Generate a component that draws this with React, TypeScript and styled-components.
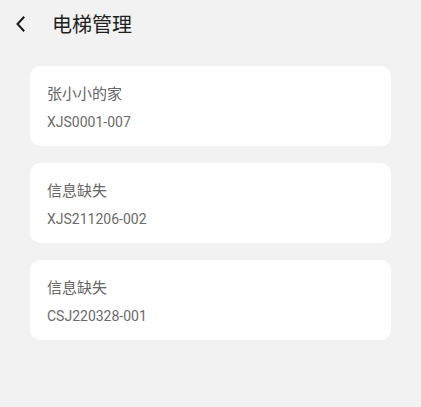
import React from "react";
import styled, { createGlobalStyle } from "styled-components";

const GlobalStyle = createGlobalStyle`
  html, body { margin: 0; padding: 0; background: #f2f2f2; }
  body { font-family: Roboto, "Noto Sans CJK SC", sans-serif; }
`;

interface Elevator {
  name: string;
  code: string;
}

const elevators: Elevator[] = [
  { name: "张小小的家", code: "XJS0001-007" },
  { name: "信息缺失", code: "XJS211206-002" },
  { name: "信息缺失", code: "CSJ220328-001" },
];

export default function App() {
  return (
    <Page>
      <GlobalStyle />
      <Header>
        <BackBtn type="button" aria-label="返回">
          <svg width="10" height="16" viewBox="0 0 10 16" fill="none">
            <path d="M7.5 1.5 L1.5 8 L7.5 14.5" stroke="#1a1a1a" strokeWidth="2" strokeLinecap="square" />
          </svg>
        </BackBtn>
        <Title>电梯管理</Title>
      </Header>

      <List>
        {elevators.map((e, i) => (
          <Card key={i}>
            <Name>{e.name}</Name>
            <Code>{e.code}</Code>
          </Card>
        ))}
      </List>
    </Page>
  );
}

// ===================== styled ===================== //
const Page = styled.main`
  min-height: 407px;
  background: #f2f2f2;
`;

const Header = styled.header`
  height: 48px;
  display: flex;
  align-items: center;
  padding-left: 11px;
  gap: 21px;
`;

const BackBtn = styled.button`
  border: none; background: transparent; padding: 0;
  width: 20px; height: 24px;
  display: grid; place-items: center;
  cursor: pointer;
`;

const Title = styled.h1`
  margin: 0;
  font-family: "Noto Sans CJK SC", sans-serif;
  font-size: 20px; font-weight: 400; line-height: 28px;
  color: #1f1f1f;
`;

const List = styled.section`
  display: grid;
  gap: 17px;
  padding: 18px 30px 0;
`;

const Card = styled.article`
  height: 80px;
  box-sizing: border-box;
  background: #ffffff;
  border-radius: 10px;
  padding: 16px 17px 0;
  display: flex;
  flex-direction: column;
`;

const Name = styled.div`
  font-family: "Noto Sans CJK SC", sans-serif;
  font-size: 15px; line-height: 22px;
  color: #666666;
  margin-bottom: 8px;
`;

const Code = styled.div`
  font-family: Roboto, sans-serif;
  font-size: 14px; line-height: 20px;
  color: #6b6b6b;
`;
